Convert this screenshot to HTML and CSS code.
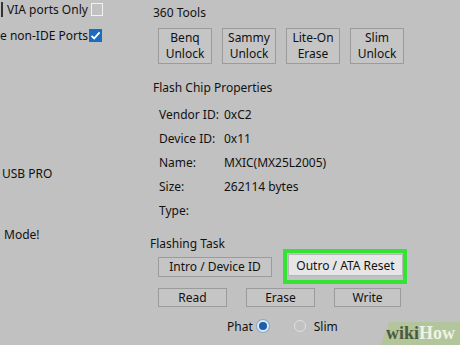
FILE: index.html
```html
<!DOCTYPE html>
<html>
<head>
<meta charset="utf-8">
<link rel="stylesheet" href="styles.css">
</head>
<body>
<div class="app">
  <div class="left">
    <div class="opt opt1">
      <span class="bar"></span>
      <span class="lbl">VIA ports Only</span>
      <span class="check"></span>
    </div>
    <div class="opt opt2">
      <span class="lbl">e non-IDE Ports</span>
      <span class="check checked">
        <svg width="13" height="13" viewBox="0 0 13 13"><path d="M2.5 6.8 L5.2 9.4 L10.6 3.4" fill="none" stroke="#fff" stroke-width="1.8"/></svg>
      </span>
    </div>
    <div class="usb">USB PRO</div>
    <div class="mode">Mode!</div>
  </div>
  <div class="right">
    <div class="head h360">360 Tools</div>
    <div class="tools">
      <button class="btn tool">Benq<br>Unlock</button>
      <button class="btn tool">Sammy<br>Unlock</button>
      <button class="btn tool">Lite-On<br>Erase</button>
      <button class="btn tool">Slim<br>Unlock</button>
    </div>
    <div class="head hchip">Flash Chip Properties</div>
    <div class="props">
      <div class="prop"><span class="k">Vendor ID:</span><span class="v">0xC2</span></div>
      <div class="prop"><span class="k">Device ID:</span><span class="v">0x11</span></div>
      <div class="prop"><span class="k">Name:</span><span class="v">MXIC(MX25L2005)</span></div>
      <div class="prop"><span class="k">Size:</span><span class="v">262114 bytes</span></div>
      <div class="prop"><span class="k">Type:</span><span class="v"></span></div>
    </div>
    <div class="head htask">Flashing Task</div>
    <div class="taskrow">
      <button class="btn intro">Intro / Device ID</button>
      <div class="hl"><button class="btn outro">Outro / ATA Reset</button></div>
    </div>
    <div class="rwrow">
      <button class="btn rw read">Read</button>
      <button class="btn rw erase">Erase</button>
      <button class="btn rw write">Write</button>
    </div>
    <div class="radios">
      <span class="rlbl">Phat</span>
      <span class="radio on"></span>
      <span class="radio off"></span>
      <span class="rlbl slim">Slim</span>
    </div>
  </div>
</div>
<div class="wh"><span class="wiki">wiki</span><span class="how">How</span></div>
</body>
</html>
```
FILE: styles.css
```css
html, body {
  margin: 0;
  padding: 0;
}
body {
  width: 460px;
  height: 345px;
  overflow: hidden;
  background: #c1c1c1;
  font-family: "Noto Sans", "Open Sans", sans-serif;
  font-size: 12px;
  color: #111;
  position: relative;
}
.app {
  display: flex;
  height: 345px;
}
.left {
  width: 150px;
  flex: none;
  display: flex;
  flex-direction: column;
}
.opt {
  display: flex;
  align-items: center;
  height: 15px;
  line-height: 15px;
}
.opt1 { margin-top: 2px; padding-left: 1px; }
.opt2 { margin-top: 11px; }
.bar {
  width: 2px;
  height: 15px;
  background: #333;
  margin-right: 4px;
}
.opt1 .lbl { width: 84px; }
.opt2 .lbl { width: 89px; }
.check {
  width: 12px;
  height: 13px;
  border: 1px solid #f2f2f2;
  box-sizing: border-box;
  display: inline-block;
}
.check.checked {
  width: 13px;
  border: none;
  background: #1b6cbf;
}
.check svg { display: block; }
.usb {
  margin-top: 123px;
  padding-left: 2px;
  line-height: 16px;
}
.mode {
  margin-top: 45px;
  padding-left: 4px;
  line-height: 16px;
}
.right {
  flex: 1;
  display: flex;
  flex-direction: column;
}
.head {
  line-height: 16px;
  height: 16px;
}
.h360 { margin-top: 5px; padding-left: 3px; }
.tools {
  display: flex;
  gap: 10px;
  margin-top: 7px;
  padding-left: 8px;
}
.btn {
  font: inherit;
  color: inherit;
  background: #c5c5c5;
  border: 1px solid #9b9b9b;
  margin: 0;
  padding: 0;
  box-sizing: border-box;
  line-height: 15px;
}
.tool {
  width: 54px;
  height: 36px;
  line-height: 16px;
}
.hchip { margin-top: 16px; padding-left: 3px; }
.props {
  padding-left: 9px;
  margin-top: 7px;
}
.prop {
  display: flex;
  height: 24px;
  line-height: 24px;
}
.k { width: 65px; }
.htask { margin-top: 13px; margin-bottom: -3px; }
.taskrow {
  display: flex;
  align-items: center;
  padding-left: 8px;
  gap: 11px;
}
.intro {
  width: 114px;
  height: 20px;
}
.hl {
  border: 4px solid #35e336;
  padding: 1px 0 4px 1px;
  width: 124px;
  box-sizing: border-box;
}
.outro {
  display: block;
  width: 115px;
  height: 22px;
  background: #e6e6e6;
  border-color: #b8b8b8;
}
.rwrow {
  display: flex;
  gap: 19px;
  padding-left: 8px;
  margin-top: 4px;
}
.rw { width: 69px; height: 19px; }
.write { width: 67px; }
.radios {
  display: flex;
  align-items: center;
  margin-top: 10px;
  height: 18px;
  padding-left: 77px;
}
.radio {
  width: 12px;
  height: 12px;
  border-radius: 50%;
  box-sizing: border-box;
  display: inline-block;
}
.radio.on {
  margin-left: 4px;
  background: #1b5fa8;
  border: 2px solid #dfe8f2;
  box-shadow: 0 0 0 1px #8aa8c8;
}
.radio.off {
  margin-left: 25px;
  border: 1px solid #e0e0e0;
}
.slim { margin-left: 8px; }
.wh {
  position: absolute;
  right: 0;
  bottom: 0;
  width: 79px;
  height: 23px;
  background: #b3c59c;
  clip-path: polygon(8px 0, 100% 0, 100% 100%, 0 100%);
  font-family: "Liberation Serif", "DejaVu Serif", serif;
  font-weight: bold;
  font-size: 18px;
  line-height: 23px;
  padding-left: 5px;
  box-sizing: border-box;
  white-space: nowrap;
}
.wiki { color: #4b5a3c; }
.how { color: #eef3e6; }
```
